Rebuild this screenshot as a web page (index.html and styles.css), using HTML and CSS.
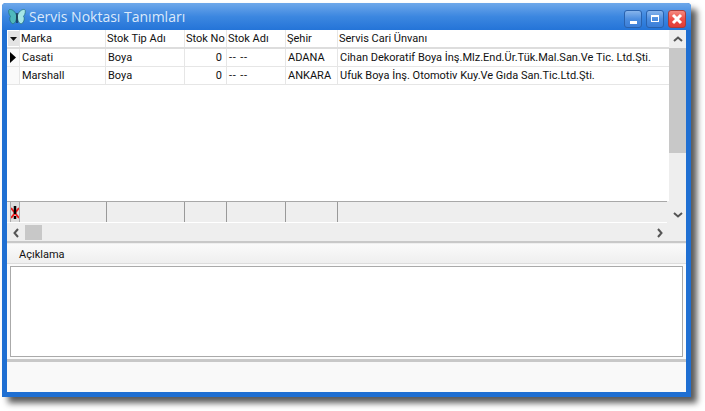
FILE: index.html
```html
<!DOCTYPE html>
<html lang="tr">
<head>
    <meta charset="UTF-8">
    <title>Servis Noktası Tanımları</title>
    <link rel="stylesheet" href="styles.css">
</head>
<body>

<div class="window">
    <div class="titlebar">
        <svg class="app-icon" width="18" height="18" viewBox="0 0 18 18">
            <path d="M8.500 7.500C7.500 4 4.500 1 1.500 1.500 0 2 .5 6 2.500 8.500 1 10 2 14 4 15.500 6.500 16.500 8.500 13 8.500 9Z" fill="#4fb8bc" stroke="#1f6f78" stroke-width=".7"/>
            <path d="M9.500 7.500C10.500 4 13.500 1 16.500 1.500 18 2 17.500 6 15.500 8.500 17 10 16 14 14 15.500 11.500 16.500 9.500 13 9.500 9Z" fill="#a5e6e6" stroke="#1f6f78" stroke-width=".7"/>
            <path d="M9 5V15" stroke="#123" stroke-width="1.200"/>
        </svg>
        <span class="title">Servis Noktası Tanımları</span>
        <div class="caption-buttons">
            <div class="caption-btn"><span class="min-glyph"></span></div>
            <div class="caption-btn"><span class="max-glyph"></span></div>
            <div class="caption-btn close">
                <svg width="12" height="12" viewBox="0 0 12 12"><path d="M2 2L10 10M10 2L2 10" stroke="#fff" stroke-width="3"/></svg>
            </div>
        </div>
    </div>

    <div class="client">
        <div class="grid-area">
            <div class="grid-main">
                <div class="grid-body">
                    <div class="grid-row head">
                        <div class="cell indicator">
                            <span class="drop-btn"><svg width="7" height="4" viewBox="0 0 7 4"><path d="M0 0H7L3.500 4Z" fill="#111"/></svg></span>
                        </div>
                        <div class="cell">Marka</div>
                        <div class="cell">Stok Tip Adı</div>
                        <div class="cell">Stok No</div>
                        <div class="cell">Stok Adı</div>
                        <div class="cell">Şehir</div>
                        <div class="cell">Servis Cari Ünvanı</div>
                    </div>
                    <div class="grid-row">
                        <div class="cell indicator"><svg width="6" height="11" viewBox="0 0 6 11"><path d="M0 0L6 5.500 0 11Z" fill="#000"/></svg></div>
                        <div class="cell">Casati</div>
                        <div class="cell">Boya</div>
                        <div class="cell num">0</div>
                        <div class="cell dash">-- --</div>
                        <div class="cell">ADANA</div>
                        <div class="cell">Cihan Dekoratif Boya İnş.Mlz.End.Ür.Tük.Mal.San.Ve Tic. Ltd.Şti.</div>
                    </div>
                    <div class="grid-row">
                        <div class="cell indicator"></div>
                        <div class="cell">Marshall</div>
                        <div class="cell">Boya</div>
                        <div class="cell num">0</div>
                        <div class="cell dash">-- --</div>
                        <div class="cell">ANKARA</div>
                        <div class="cell">Ufuk Boya İnş. Otomotiv Kuy.Ve Gıda San.Tic.Ltd.Şti.</div>
                    </div>
                </div>
                <div class="grid-row foot">
                    <div class="foot-icon">
                        <svg width="8" height="15" viewBox="0 0 8 15">
                            <path d="M0 3L8 13M8 3L0 13" stroke="#f01818" stroke-width="2"/>
                            <path d="M4 1V9M4 11V14" stroke="#000" stroke-width="2.500"/>
                        </svg>
                    </div>
                    <div class="foot-cell"></div>
                    <div class="foot-cell"></div>
                    <div class="foot-cell"></div>
                    <div class="foot-cell"></div>
                    <div class="foot-cell"></div>
                    <div class="foot-cell last"></div>
                </div>
            </div>
            <div class="vscroll">
                <div class="arrow-box top">
                    <svg width="10" height="6" viewBox="0 0 10 6"><path d="M1 5L5 1.500 9 5" fill="none" stroke="#555" stroke-width="2"/></svg>
                </div>
                <div class="vthumb"></div>
                <div class="vtrack"></div>
                <div class="arrow-box bottom">
                    <svg width="10" height="6" viewBox="0 0 10 6"><path d="M1 1L5 4.500 9 1" fill="none" stroke="#555" stroke-width="2"/></svg>
                </div>
            </div>
        </div>
        <div class="hscroll">
            <div class="harrow">
                <svg width="6" height="10" viewBox="0 0 6 10"><path d="M5 1L1.500 5 5 9" fill="none" stroke="#555" stroke-width="2"/></svg>
            </div>
            <div class="hthumb"></div>
            <div class="htrack"></div>
            <div class="harrow">
                <svg width="6" height="10" viewBox="0 0 6 10"><path d="M1 1L4.500 5 1 9" fill="none" stroke="#555" stroke-width="2"/></svg>
            </div>
        </div>

        <div class="panel">
            <div class="panel-head">Açıklama</div>
            <div class="panel-box-wrap">
                <div class="panel-box"></div>
            </div>
        </div>
        <div class="status"></div>
    </div>
</div>

</body>
</html>
```

FILE: styles.css
```css
body {
    margin: 0;
    width: 705px;
    height: 411px;
    box-sizing: border-box;
    overflow: hidden;
    padding: 3px 0 0 2px;
    background-color: #fff;
    font-family: Roboto, "Liberation Sans", Arial, sans-serif;
    font-size: 11px;
    color: #111;
}
.window {
    width: 689px;
    height: 394px;
    box-sizing: border-box;
    display: flex;
    flex-direction: column;
    padding: 0 5px 5px 5px;
    background-color: #1f6fd2;
    border-radius: 4px 4px 0 0;
    box-shadow: 6px 6px 6px rgba(0, 0, 0, 0.65);
}
.titlebar {
    height: 27px;
    flex: none;
    display: flex;
    align-items: center;
    margin: 0 -5px;
    padding: 0 5px 0 5px;
    background: linear-gradient(#6ea8ea, #3c87e0 50%, #2474d8);
    border-radius: 4px 4px 0 0;
}
.app-icon {
    margin-left: 1px;
}
.title {
    margin-left: 3px;
    font-family: "Open Sans", sans-serif;
    font-size: 14px;
    color: #dce9fa;
}
.caption-buttons {
    margin-left: auto;
    display: flex;
    gap: 4px;
    margin-top: 4px;
}
.caption-btn {
    width: 18px;
    height: 18px;
    box-sizing: border-box;
    display: flex;
    align-items: center;
    justify-content: center;
    position: relative;
    border: 1px solid #2a62ad;
    border-radius: 3px;
    background: linear-gradient(#86b4ec, #4d8ee0 50%, #3b7ed8);
}
.caption-btn.close {
    border-color: #a83c3c;
    background: linear-gradient(#f58a80, #ee4f47 50%, #e03c36);
}
.min-glyph {
    width: 7px;
    height: 3px;
    margin-top: 8px;
    background-color: #fff;
}
.max-glyph {
    width: 8px;
    height: 7px;
    box-sizing: border-box;
    border: 1px solid #fff;
    border-top-width: 2px;
}
.client {
    flex: 1;
    display: flex;
    flex-direction: column;
    background-color: #eee;
}
.grid-area {
    height: 194px;
    flex: none;
    display: flex;
}
.grid-main {
    flex: 1;
    display: flex;
    flex-direction: column;
    padding-bottom: 1px;
    background-color: #eee;
}
.grid-body {
    flex: 1;
    background-color: #fff;
}
.grid-row {
    display: grid;
    grid-template-columns: 13px 86px 79px 42px 59px 52px 1fr;
    height: 18px;
    box-sizing: border-box;
    border-bottom: 1px solid #e6e6e6;
}
.grid-row.head {
    height: 19px;
    background-color: #fff;
    border-bottom: 2px solid #ddd;
}
.cell {
    padding: 0 2px 0 2px;
    line-height: 17px;
    border-right: 1px solid #e6e6e6;
    white-space: nowrap;
    overflow: hidden;
}
.head .cell {
    padding-left: 1px;
    line-height: 17px;
}
.cell:last-child {
    border-right: none;
}
.num {
    text-align: right;
    padding-right: 4px;
}
.dash {
    letter-spacing: 0.8px;
}
.indicator {
    padding: 0 0 0 3px;
    display: flex;
    align-items: center;
    background-color: #fafafa;
}
.head .indicator {
    padding: 0;
    background-color: #fff;
    justify-content: center;
}
.drop-btn {
    width: 11px;
    height: 15px;
    display: flex;
    align-items: center;
    justify-content: center;
    background-color: #e4e4e4;
}
.grid-row.foot {
    height: 22px;
    flex: none;
    margin-right: 2px;
    border-top: 1px solid #a8a8a8;
    border-bottom: 1px solid #fff;
    background-color: #eee;
    grid-template-columns: 13px 87px 78px 42px 59px 52px 1fr;
}
.foot-icon {
    margin: 0 0 0 3px;
    width: 10px;
    box-sizing: border-box;
    display: flex;
    align-items: center;
    justify-content: center;
    background-color: #ddd;
    border-left: 1px solid #aaa;
    border-right: 1px solid #aaa;
}
.foot-cell {
    border-right: 1px solid #999;
}
.foot-cell.last {
    border-right: none;
}
.vscroll {
    width: 17px;
    flex: none;
    display: flex;
    flex-direction: column;
    background-color: #eee;
}
.arrow-box {
    height: 18px;
    flex: none;
    display: flex;
    align-items: center;
    justify-content: center;
}
.vthumb {
    height: 105px;
    flex: none;
    background-color: #c8c8c8;
}
.vtrack {
    flex: 1;
}
.hscroll {
    height: 17px;
    flex: none;
    display: flex;
    align-items: center;
    background-color: #eee;
    border-bottom: 2px solid #c8c8c8;
}
.harrow {
    width: 18px;
    flex: none;
    display: flex;
    justify-content: center;
}
.hthumb {
    width: 17px;
    height: 15px;
    flex: none;
    background-color: #c8c8c8;
}
.htrack {
    flex: 1;
}
.hscroll .harrow:last-child {
    margin-right: 17px;
}
.panel {
    flex: none;
    margin: 1px 0 0;
    background-color: #fff;
    border-bottom: 3px solid #c8c8c8;
}
.panel-head {
    height: 19px;
    line-height: 21px;
    padding-left: 12px;
    background: linear-gradient(#fafafa, #efefef);
    border-bottom: 1px solid #ddd;
}
.panel-box-wrap {
    padding: 2px 3px 2px;
    background-color: #fbfbfb;
}
.panel-box {
    height: 89px;
    background-color: #fff;
    border: 1px solid #aaa;
}
.status {
    flex: 1;
    background-color: #f9f9f9;
}
```
